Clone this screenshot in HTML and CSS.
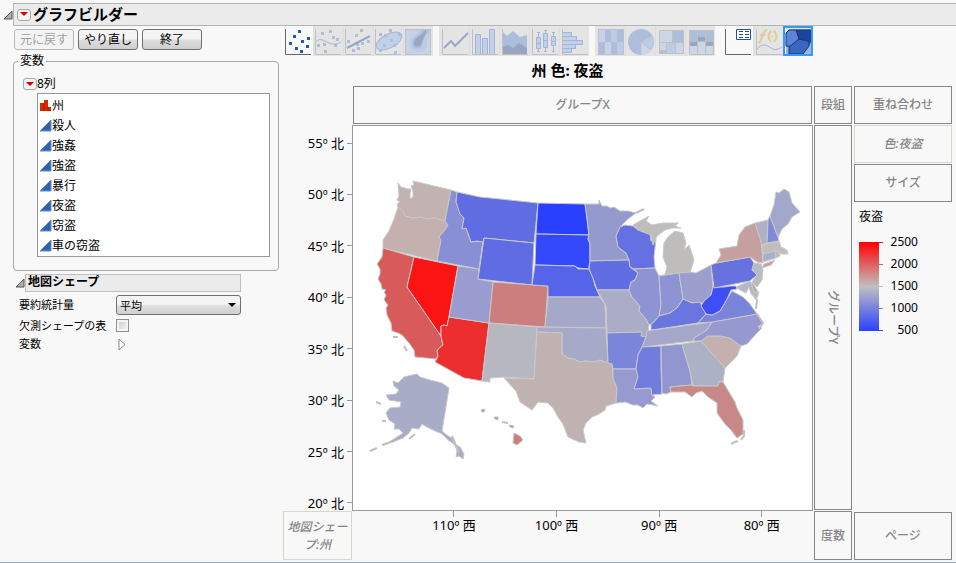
FILE: index.html
```
<!DOCTYPE html>
<html lang="ja">
<head>
    <meta charset="UTF-8">
    <meta name="viewport" content="width=device-width, initial-scale=1.0">
    <title>グラフビルダー</title>
    <link rel="stylesheet" href="styles.css">
</head>
<body>
    <header class="titlebar">
        <svg class="disclosure" width="10" height="10"><path d="M1 9H9V1Z"/></svg>
        <div class="titlebar-band">
            <button class="menu-button" aria-label="メニュー"><svg width="8" height="5"><path d="M0 0H8L4 4Z"/></svg></button>
            <h1>グラフビルダー</h1>
        </div>
    </header>

    <main class="workspace">
        <aside class="sidebar">
            <div class="actions">
                <button disabled>元に戻す</button>
                <button>やり直し</button>
                <button>終了</button>
            </div>

            <fieldset class="variables">
                <legend>変数</legend>
                <div class="variables-head">
                    <button class="menu-button" aria-label="列メニュー"><svg width="8" height="5"><path d="M0 0H8L4 4Z"/></svg></button>
                    <span>8列</span>
                </div>
                <ul class="variable-list">
                    <li><svg class="nominal" width="12" height="12"><path d="M0 11V3H4V0H8V7H11V11Z"/><path class="line" d="M4 3V11M8 7V11"/></svg>州</li>
                    <li><svg class="continuous" width="12" height="12"><path d="M0 11L11 0V11Z"/></svg>殺人</li>
                    <li><svg class="continuous" width="12" height="12"><path d="M0 11L11 0V11Z"/></svg>強姦</li>
                    <li><svg class="continuous" width="12" height="12"><path d="M0 11L11 0V11Z"/></svg>強盗</li>
                    <li><svg class="continuous" width="12" height="12"><path d="M0 11L11 0V11Z"/></svg>暴行</li>
                    <li><svg class="continuous" width="12" height="12"><path d="M0 11L11 0V11Z"/></svg>夜盗</li>
                    <li><svg class="continuous" width="12" height="12"><path d="M0 11L11 0V11Z"/></svg>窃盗</li>
                    <li><svg class="continuous" width="12" height="12"><path d="M0 11L11 0V11Z"/></svg>車の窃盗</li>
                </ul>
            </fieldset>

            <section class="shape-options">
                <div class="shape-head">
                    <svg class="disclosure" width="10" height="10"><path d="M1 9H9V1Z"/></svg>
                    <h2>地図シェープ</h2>
                </div>
                <div class="shape-form">
                    <label for="summary">要約統計量</label>
                    <div class="select">
                        <select id="summary"><option>平均</option></select>
                    </div>
                    <label for="missing">欠測シェープの表</label>
                    <input type="checkbox" id="missing">
                    <span>変数</span>
                    <button class="expand" aria-label="変数を開く"><svg width="8" height="13"><path d="M1 1L7 6.500L1 12Z"/></svg></button>
                </div>
            </section>
        </aside>

        <section class="builder">
            <nav class="toolbar">
                <div class="tool-group">
                    <button class="tool on" aria-label="点"><svg viewBox="0 0 30 30">
                        <path class="axis" d="M2.5 3V28.5H28"/>
                        <path class="dots" d="M15 4h3v3h-3zM10 9h3v3h-3zM6 16h3v3h-3zM18 14h3v3h-3zM24 11h3v3h-3zM23 19h3v3h-3zM12 21h3v3h-3zM17 24h3v3h-3z"/>
                    </svg></button>
                    <button class="tool" aria-label="平滑線"><svg viewBox="0 0 30 30">
                        <path class="axis" d="M2.5 3V28.5H28"/>
                        <path class="dots" d="M16 4h3v3h-3zM8 6h3v3h-3zM19 10h3v3h-3zM23 12h3v3h-3zM4 18h3v3h-3zM10 17h3v3h-3zM21 18h3v3h-3zM11 24h3v3h-3z"/>
                        <path class="line" d="M3 16C7 11 11 15 16 17S25 18 28 16"/>
                    </svg></button>
                    <button class="tool" aria-label="あてはめ線"><svg viewBox="0 0 30 30">
                        <path class="axis" d="M2.5 3V28.5H28"/>
                        <path class="dots" d="M17 3h3v3h-3zM12 8h3v3h-3zM4 14h3v3h-3zM13 17h3v3h-3zM18 16h3v3h-3zM24 14h3v3h-3zM9 23h3v3h-3zM14 21h3v3h-3z"/>
                        <path class="line thick" d="M4 22L27 10"/>
                    </svg></button>
                    <button class="tool" aria-label="楕円"><svg viewBox="0 0 30 30">
                        <path class="axis" d="M2.5 3V28.5H28"/>
                        <ellipse class="area" cx="16" cy="15" rx="14" ry="7" transform="rotate(-28 16 15)"/>
                        <path class="dots" d="M16 3h3v3h-3zM6 7h3v3h-3zM11 8h3v3h-3zM25 7h3v3h-3zM17 13h3v3h-3zM10 18h3v3h-3zM20 18h3v3h-3zM6 23h3v3h-3zM21 25h3v3h-3z"/>
                    </svg></button>
                    <button class="tool" aria-label="等高線"><svg viewBox="0 0 30 30">
                        <rect class="contour" x="2.5" y="3.5" width="25" height="25"/>
                        <path class="soft" d="M15 4C16 9 7 9 6 15S10 27 17 26S23 21 24 16S27 10 27 4Z"/>
                        <path class="deep" d="M19 4C18 9 10 10 9 16S13 23 17 22S19 16 21 12S25 8 26 4Z"/>
                        <path class="dark" d="M22 4C20 10 11 11 11 17S18 21 19 16S23 10 23 4Z"/>
                    </svg></button>
                </div>
                <div class="tool-group">
                    <button class="tool" aria-label="折れ線"><svg viewBox="0 0 30 30">
                        <path class="axis" d="M3.5 3V28.5H29"/>
                        <path class="line thick" d="M5 22L12 15L16 20L29 7"/>
                    </svg></button>
                    <button class="tool" aria-label="棒"><svg viewBox="0 0 30 30">
                        <path class="axis" d="M3.5 3V28.5H29"/>
                        <path class="area" d="M6.500 28V8.500H11.500V28M13.500 28V12.500H18.500V28M20.500 28V3.500H25.500V28"/>
                    </svg></button>
                    <button class="tool" aria-label="面"><svg viewBox="0 0 30 30">
                        <path class="deep" d="M4 6L8 10L14 5L21 11L28 9V28H4Z"/>
                        <path class="dark" d="M4 21L9 19L14 22L20 17L28 22V28H4Z"/>
                        <path class="axis" d="M3.5 3V28.5H29"/>
                    </svg></button>
                    <button class="tool" aria-label="箱ひげ図"><svg viewBox="0 0 30 30">
                        <path class="axis" d="M3.5 3V28.5H29"/>
                        <path class="line" d="M9.500 6V26M16.500 4V26M24.500 6V26M8 6.500H11M8 25.500H11M15 4.500H18M15 25.500H18M23 6.500H26M23 25.500H26"/>
                        <path class="area" d="M7.500 11.500h4v11h-4zM14.500 7.500h4v14h-4zM22.500 10.500h4v9h-4zM7.500 17.500h4M14.500 14.500h4M22.500 15.500h4"/>
                    </svg></button>
                    <button class="tool" aria-label="ヒストグラム"><svg viewBox="0 0 30 30">
                        <path class="area" d="M3.500 6.500h9v4h-9zM3.500 10.500h14v4h-14zM3.500 14.500h20v4h-20zM3.500 18.500h13v4h-13zM3.500 22.500h9v4h-9z"/>
                        <path class="axis" d="M3.5 3V28.5H29"/>
                    </svg></button>
                </div>
                <div class="tool-group">
                    <button class="tool" aria-label="ヒートマップ"><svg viewBox="0 0 30 30">
                        <rect class="contour" x="3.5" y="3.5" width="25" height="25"/>
                        <path class="deep" d="M10 4h6v12h-6zM22 4h6v12h-6zM4 16h6v12h-6zM16 16h6v12h-6z"/>
                        <path class="soft" d="M16 4h6v12h-6zM22 16h6v12h-6z"/>
                    </svg></button>
                    <button class="tool" aria-label="円"><svg viewBox="0 0 30 30">
                        <circle class="deep" cx="16" cy="16" r="13"/>
                        <path class="soft" d="M16 16L28 10A13 13 0 0 1 26 24Z"/>
                        <path class="pale" d="M16 16L26 24A13 13 0 0 1 16 29Z"/>
                        <path class="line thin" d="M6 8L16 16L28 10M16 16L26 24M16 16V29"/>
                    </svg></button>
                    <button class="tool" aria-label="ツリーマップ"><svg viewBox="0 0 30 30">
                        <rect class="pale" x="4" y="5" width="24" height="23"/>
                        <path class="deep" d="M18 5h10v11H18zM4 25h7v3H4z"/>
                        <path class="soft" d="M12 16h9v12h-9z"/>
                        <path class="axis" d="M4.500 4.500H28.500V27.500H4.500ZM4.500 16.500H28.500M17.500 4.500V16.500M11.500 16.500V27.500M20.500 16.500V27.500M4.500 24.500H11.500"/>
                    </svg></button>
                    <button class="tool" aria-label="モザイク"><svg viewBox="0 0 30 30">
                        <path class="deep" d="M4 5h24v11H4z"/>
                        <path class="pale" d="M4 16h24v12H4z"/>
                        <path class="dark" d="M4 16h8v4H4zM12 11h8v4h-8zM20 16h8v4h-8z"/>
                        <path class="axis" d="M4.500 4.500H28.500V28.500H4.500ZM12.500 4.500V28.500M20.500 4.500V28.500"/>
                    </svg></button>
                </div>
                <div class="tool-group last">
                    <button class="tool on" aria-label="凡例"><svg viewBox="0 0 30 30">
                        <path class="axis" d="M2.5 3V28.5H28"/>
                        <path class="caption" d="M13.500 3.500H27.500V13.500H13.500Z"/>
                        <path class="caption-line" d="M16 5.500h4M16 8.500h4M16 11.500h4M22 5.500h4M22 8.500h4M22 11.500h4"/>
                    </svg></button>
                    <button class="tool" aria-label="計算式"><svg viewBox="0 0 30 30">
                        <path class="axis" d="M3.5 3V28.5H29"/>
                        <path class="formula" d="M5 16C9 19 9 3 14 4M7 9H12M18 5Q13 10 18 16M21 5Q26 10 21 16"/>
                        <circle class="formula-dot" cx="19.500" cy="10.500" r="1"/>
                        <path class="line" d="M4 23C9 17 14 19 18 22S26 23 29 21"/>
                    </svg></button>
                    <button class="tool selected" aria-label="地図シェープ"><svg viewBox="0 0 30 30">
                        <rect fill="#9fb5dc" x="2" y="3" width="26" height="25"/>
                        <path fill="#f0f3f8" d="M2 3H6L3 7V28H2Z"/>
                        <path fill="#1c449c" d="M13 4H28V16L16 13Z"/>
                        <path fill="#5c85d6" d="M6 4H13L16 13L7 21L3 20V7Z"/>
                        <path fill="#3a66be" d="M16 13L28 16L26 20L20 28H6V21Z"/>
                        <path fill="none" stroke="#173370" d="M13 4L16 13L28 16M16 13L6 21M28 4H6L3 7V20H6V28H20L26 20V16"/>
                    </svg></button>
                </div>
            </nav>

            <div class="chart">
                <div class="chart-main">
                    <h2 class="chart-title">州 色: 夜盗</h2>
                    <div class="zone group-x">グループX</div>
                    <div class="zone wrap">段組</div>
                    <div class="axis-y">
                        <span>55º 北</span>
                        <span>50º 北</span>
                        <span>45º 北</span>
                        <span>40º 北</span>
                        <span>35º 北</span>
                        <span>30º 北</span>
                        <span>25º 北</span>
                        <span>20º 北</span>
                    </div>
                    <div class="plot">
                        <svg class="map" viewBox="353 126 459 384" role="img" aria-label="州別の夜盗の地図">
                            <!-- Pacific and mountain states -->
                            <path fill="#c2b2b1" d="M398 183L401 187L408 189L411 189L410 194L410 199L413 197L413 191L411 186L414 185L413 181L451 190L445 221L435 218L428 219L420 217L412 218L405 216L403 211L398 207L397 204L400 202L397 200L399 196Z"/>
                            <path fill="#c3b0af" d="M398 207L403 211L405 216L412 218L420 217L428 219L435 218L445 221L448 225L445 230L439 237L441 240L437 261L383 248L383 240L389 231L394 219Z"/>
                            <path fill="#d85a5a" d="M383 248L414 257L407 287L441 336L443 345L439 348L437 351L438 356L436 359L415 357L414 350L409 343L402 335L398 333L392 331L391 323L387 315L386 308L388 305L384 300L386 295L384 292L386 290L382 289L381 284L378 279L380 274L380 269L377 264L382 257Z"/>
                            <path fill="#fb1414" d="M414 257L458 266L449 317L447 326L444 325L441 326L441 336L407 287Z"/>
                            <path fill="#ec2e2e" d="M449 317L489 323L482 381L464 378L435 362L438 356L437 351L439 348L443 345L441 336L441 326L444 325L447 326Z"/>
                            <path fill="#9a9ccf" d="M458 266L479 269L478 279L493 282L489 323L449 317Z"/>
                            <path fill="#888fd4" d="M451 190L457 192L456 202L460 211L464 218L462 228L466 228L471 242L483 241L479 269L437 261L441 240L439 237L445 230L448 225L445 221Z"/>
                            <path fill="#606ce2" d="M457 192L480 197L500 199L538 203L534 243L484 238L483 242L477 241L471 242L469 236L466 228L462 229L464 218L460 214L456 202Z"/>
                            <path fill="#606ce4" d="M484 238L534 243L532 285L478 279Z"/>
                            <path fill="#cb7e7d" d="M493 282L548 286L545 327L489 323Z"/>
                            <path fill="#b6b7c1" d="M489 323L537 327L534 379L503 377L490 378V382L482 381Z"/>

                            <!-- Plains -->
                            <path fill="#2a40ff" d="M538 203L585 204L587 216L588 227L589 235L536 234Z"/>
                            <path fill="#3449fb" d="M536 234L589 235L588 239L590 244V261L589 266L589 269L578 268L575 266L535 265Z"/>
                            <path fill="#5664ea" d="M535 265L575 266L578 269L589 269L593 278L595 286L600 297L548 297V286L532 285Z"/>
                            <path fill="#a5a8c9" d="M548 297H600L605 305L606 328L545 327Z"/>
                            <path fill="#a6aac8" d="M537 327L606 328L608 363L600 360L594 362L586 361L580 362L574 359L568 358L562 354V333L537 332Z"/>
                            <path fill="#c1b2b2" d="M537 332L562 333V354L568 358L574 359L580 362L586 361L594 362L600 360L608 363L612 364L613 378L617 388L616 403L606 406L605 410L599 414L592 417L586 423L583 430L586 443L579 442L568 437L563 424L558 417L553 408L548 403L538 402L532 410L520 402L516 391L504 378L534 379Z"/>
                            <path fill="#959ace" d="M585 204H599V200L602 206L607 206L610 208L614 207L620 211L628 211L636 213L628 219L620 227L616 236L618 247L626 253L629 260L590 261V244L588 239L589 235Z"/>
                            <path fill="#606de3" d="M590 261L629 260L630 267L638 273L635 280L631 282L629 290L597 290L593 278L589 269Z"/>
                            <path fill="#abadc6" d="M597 290L629 290L632 297L640 306L639 311L646 319L649 325L648 332L646 337L641 336L642 332L607 333L606 306Z"/>
                            <path fill="#7b85da" d="M607 333L642 332L641 336L646 337L642 347L638 355L636 369L613 369L612 364L608 363Z"/>
                            <path fill="#969ad0" d="M613 369H636L638 377L634 389L651 388L652 395L655 397L651 401L658 406L653 405L647 404L643 408L638 405L633 405L625 402L616 403L617 388L613 378Z"/>

                            <!-- Great Lakes -->
                            <path fill="#6570e2" d="M620 227L625 225L633 226L638 230L650 233L651 241L656 239L654 257L655 268L634 269L630 267L629 260L626 253L618 247L616 236Z"/>
                            <path fill="#bfbdbc" d="M633 225L640 221L649 216L646 221L652 225L663 223L674 223L677 227L681 228L672 228L665 230L657 236L653 245L651 235L638 230ZM659 276L665 275L667 267L663 257L664 243L668 237L675 231L683 233L686 243L684 250L689 245L694 260L690 272L679 273Z"/>
                            <path class="islands" d="M636 213L644 209M673 225L678 223"/>
                            <path fill="#8d93d3" d="M634 269L655 268L659 276L661 305L659 316L654 322L651 324L649 325L646 319L639 311L640 306L632 297L629 290L631 282L635 280L638 273Z"/>
                            <path fill="#8d93d3" d="M659 276L679 273L683 299L677 308L670 313L659 316L661 305Z"/>
                            <path fill="#9c9fcd" d="M679 273L690 272L696 273L711 265L713 287L711 295L704 303L692 303L683 299Z"/>
                            <path fill="#6a75df" d="M651 330V324L654 322L659 316L670 313L677 308L683 299L692 303L700 302L706 314L698 323L652 330Z"/>
                            <path fill="#a5a7ca" d="M647 331L712 322L707 330L694 338L693 341L642 347L646 337Z"/>

                            <!-- South -->
                            <path fill="#717cde" d="M642 347L661 346V370L662 394L652 395L651 388L634 389L638 377L636 369L638 355Z"/>
                            <path fill="#9296d0" d="M661 346L682 344L690 371L692 385L670 387L671 392L666 394L662 393Z"/>
                            <path fill="#adb1c5" d="M682 344L701 341L710 351L725 368L723 382L719 382L718 386L693 386L690 371Z"/>
                            <path fill="#c3b0af" d="M701 341L708 336L720 336L730 338L741 346L737 356L725 368L710 351Z"/>
                            <path fill="#9599d0" d="M712 322L757 314L763 323L758 327L762 328L757 333L747 344L741 346L730 338L720 336L708 336L701 341L693 341L694 338L707 330Z"/>
                            <path fill="#7a85d9" d="M698 323L706 314L712 315L720 311L727 299L732 291L743 297L750 304L757 314L712 322Z"/>
                            <path fill="#3c4ff8" d="M713 287L724 287L730 286L736 286L737 289L731 290L727 299L720 311L712 315L706 314L701 306L704 301L711 295Z"/>
                            <path fill="#c98888" d="M670 387L692 385L693 386L718 386L719 382L723 382L729 392L735 402L737 408L743 420V434L737 438L731 430L725 424L717 413V403L708 397L702 391L696 393L692 397L685 392L671 392Z"/>
                            <path class="islands" d="M744 430V436L741 440M731 444L735 442L738 441M753 295L757 300L756 309M757 314L763 323L759 329"/>

                            <!-- Northeast -->
                            <path fill="#6872df" d="M711 265L716 263L750 257L754 263L752 270L757 275L750 281L714 288Z"/>
                            <path fill="#c5a09f" d="M716 263L721 255L719 249L737 246L739 235L745 227L755 223L761 240L763 263L757 262L750 257ZM762 268L764 264L775 260L771 265Z"/>
                            <path fill="#adb0c6" d="M755 223L768 220L767 243L762 245Z"/>
                            <path fill="#8289d8" d="M768 220L770 216L778 237L779 241L767 243Z"/>
                            <path fill="#a3a7ca" d="M770 216L774 205L776 192L779 193L784 189L789 192L792 203L800 212L792 217L788 224L782 229L778 237Z"/>
                            <path fill="#c1bfbe" d="M762 245L779 241L781 247L787 250L788 254L782 254L776 251L763 254Z"/>
                            <path fill="#a9aecb" d="M763 254L775 251L776 258L763 262Z"/>
                            <path fill="#bbbbc0" d="M775 251L779 252L780 256L776 258Z"/>
                            <path fill="#b8bac4" d="M754 263L761 264L763 270L762 280L757 287L752 282L757 275L752 270Z"/>
                            <path fill="#b4b7c5" d="M736 287L750 281L754 292L759 292L757 298L751 294L749 287L746 293L740 290Z"/>
                            <path fill="#c9a09f" d="M751 282L754 285L758 292H754Z"/>

                            <!-- Alaska and Hawaii -->
                            <path fill="#a9acc6" d="M393 381L398 383L404 377L412 375L417 374L420 377L430 380L442 383L449 388L442 431L448 436L454 439L456 445L460 447L464 454L463 459L459 456L456 457L457 450L454 444L448 440L442 434L433 430L425 426L422 424L419 429L412 428L409 433L403 438L393 442L384 445L394 439L403 433L399 429L394 429L395 424L389 420L386 413L390 408L400 407L401 402L389 400L386 395L396 394L399 390L394 386Z"/>
                            <path class="islands" d="M376 402L381 404M370 451L377 448M382 445L388 443M382 421H386M409 439L415 434M452 436L459 453M393 337H398M404 346L407 351M502 422L508 423"/>
                            <path fill="#cb7e7d" d="M481 410L485 409L484 412L482 412ZM494 417L498 417L498 420L495 419ZM509 425L514 426L513 428L510 427ZM514 433L520 436L523 440L517 445L513 443Z"/>
                        </svg>
                    </div>
                    <div class="zone group-y"><span>グループY</span></div>
                    <div class="zone filled map-shape">地図シェープ:州</div>
                    <div class="axis-x">
                        <span>110º 西</span>
                        <span>100º 西</span>
                        <span>90º 西</span>
                        <span>80º 西</span>
                    </div>
                    <div class="zone freq">度数</div>
                </div>

                <div class="chart-side">
                    <div class="zone">重ね合わせ</div>
                    <div class="zone filled">色:夜盗</div>
                    <div class="zone">サイズ</div>
                    <div class="color-legend">
                        <h3>夜盗</h3>
                        <div class="scale">
                            <div class="ramp"></div>
                            <ol>
                                <li class="t2500">2500</li>
                                <li class="t2000">2000</li>
                                <li class="t1500">1500</li>
                                <li class="t1000">1000</li>
                                <li class="t500">500</li>
                            </ol>
                        </div>
                    </div>
                    <div class="zone page">ページ</div>
                </div>
            </div>
        </section>
    </main>
</body>
</html>
```
FILE: styles.css
```
/* Global settings */
:root {
    --color-bg: #f8f8f8;
    --color-band: #ebebeb;
    --color-border: #b4b4b4;
    --color-zone: #868686;
    --font-default: "Noto Sans", "Noto Sans CJK JP", sans-serif;
}

* {
    box-sizing: border-box;
}

body {
    display: flex;
    flex-direction: column;
    min-height: 100vh;
    margin: 0;
    padding-top: 3px;
    border-bottom: 1px solid #98a4c8;
    background: var(--color-bg);
    color: #000;
    font-family: var(--font-default);
    font-size: 12px;
    line-height: 16px;
}

h1, h2, h3 {
    margin: 0;
}

button, select {
    font-family: inherit;
    font-size: 12px;
}

svg {
    display: block;
}

/* Title bar */
.titlebar {
    display: flex;
    align-items: center;
    padding-left: 3px;
}

.disclosure {
    flex: none;
    fill: #b0b0b0;
    stroke: #555;
}

.titlebar-band {
    display: flex;
    flex: 1;
    align-items: center;
    gap: 2px;
    height: 23px;
    padding-left: 3px;
    border: 1px solid var(--color-border);
    border-right: 0;
    background: var(--color-band);
}

.titlebar-band h1 {
    padding-bottom: 2px;
    font-size: 15px;
    line-height: 18px;
}

.menu-button {
    display: flex;
    align-items: center;
    justify-content: center;
    width: 14px;
    height: 12px;
    padding: 0;
    border: 1px solid #a8a8a8;
    border-radius: 3px;
    background: #f4f4f4;
}

.menu-button svg {
    fill: #d40000;
}

/* Left side */
.workspace {
    display: flex;
    flex: 1;
}

.sidebar {
    flex: none;
    width: 279px;
    padding: 3px 0 0 13px;
}

.actions {
    display: flex;
    gap: 4px;
    padding-left: 1px;
}

.actions button {
    width: 60px;
    height: 21px;
    padding: 0;
    border: 1px solid #707070;
    border-radius: 3px;
    background: linear-gradient(#f4f4f4 45%, #dcdcdc 55%, #cfcfcf);
    color: #000;
    line-height: 16px;
}

.actions button:disabled {
    border-color: #b8b8b8;
    background: #f4f4f4;
    color: #a0a0a0;
}

.variables {
    min-width: 0;
    margin: 3px 0 0;
    padding: 7px 8px 13px;
    border: 1px solid #a8a8a8;
    border-radius: 4px;
}

.variables legend {
    margin-left: -4px;
    padding: 0 2px;
}

.variables-head {
    display: flex;
    align-items: center;
    padding-left: 1px;
}

.variable-list {
    height: 164px;
    margin: 1px 0 0 15px;
    padding: 2px 0 0 2px;
    border: 1px solid #989898;
    background: #fff;
    list-style: none;
}

.variable-list li {
    display: flex;
    align-items: center;
    height: 20px;
}

.nominal {
    fill: #d92800;
}

.nominal .line {
    stroke: #a01800;
}

.continuous {
    fill: #2c62b4;
    stroke: #6c8cc0;
}

/* Map shape options */
.shape-head {
    display: flex;
    align-items: center;
    margin-top: 3px;
    padding-left: 2px;
}

.shape-head h2 {
    width: 216px;
    height: 18px;
    padding-left: 2px;
    border: 1px solid #c0c0c0;
    background: var(--color-band);
    font-size: 12px;
    line-height: 14px;
}

.shape-form {
    display: grid;
    grid-template-columns: 97px 125px;
    align-items: center;
    padding: 3px 0 0 6px;
    font-size: 11px;
}

.select {
    position: relative;
}

.select::after {
    content: "";
    position: absolute;
    top: 8px;
    right: 5px;
    border: 4px solid transparent;
    border-top-color: #000;
    border-bottom: 0;
    pointer-events: none;
}

.select select {
    display: block;
    width: 100%;
    height: 20px;
    padding: 0 3px;
    border: 1px solid #707070;
    border-radius: 3px;
    appearance: none;
    background: linear-gradient(#f4f4f4 45%, #dedede 55%, #d0d0d0);
    font-size: 11px;
    color: #000;
}

.shape-form input {
    width: 13px;
    height: 13px;
    margin: 4px 0;
    border: 1px solid #909090;
    appearance: none;
    background: linear-gradient(135deg, #c4c8d0, #fafafa);
    box-shadow: inset 0 0 0 2px #f4f4f4;
}

.expand {
    justify-self: start;
    padding: 0 2px;
    border: 0;
    background: none;
}

.expand svg {
    fill: #fff;
    stroke: #888;
}

/* Toolbar */
.builder {
    display: flex;
    flex: 1;
    flex-direction: column;
    min-width: 0;
    padding: 0 4px 2px;
}

.toolbar {
    display: flex;
    gap: 6px;
}

.tool-group {
    display: flex;
}

.tool-group.last {
    margin-left: 2px;
}

.tool {
    width: 30px;
    height: 30px;
    padding: 0;
    border: 0;
    background: #e4e4e4;
}

.tool + .tool {
    box-shadow: inset 1px 0 0 #ddd;
}

.tool svg {
    width: 30px;
    height: 30px;
    fill: none;
}

.tool .axis {
    stroke: #c0c0c0;
}

.tool .dots {
    fill: #aebed8;
}

.tool .line {
    stroke: #a4b4d4;
}

.tool .line.thick {
    stroke: #98a6c8;
    stroke-width: 2;
}

.tool .line.thin {
    stroke: #b8c4d8;
}

.tool .area {
    fill: #c2d0e8;
    stroke: #a2b4d8;
}

.tool .contour {
    fill: #c8d2e4;
    stroke: #bcc2cc;
}

.tool .pale {
    fill: #ccd6e6;
}

.tool .soft {
    fill: #bccce4;
}

.tool .deep {
    fill: #adbedc;
}

.tool .dark {
    fill: #98a6c4;
}

.tool .formula {
    stroke: #dfcd96;
    stroke-width: 2;
}

.tool .formula-dot {
    fill: #dfcd96;
}

.tool.on {
    background: none;
}

.tool.on .axis {
    stroke: #666;
}

.tool.on .dots {
    fill: #2458b8;
}

.tool .caption {
    fill: #fff;
    stroke: #2450a0;
}

.tool .caption-line {
    stroke: #1c48a0;
}

.tool.selected {
    outline: 2px solid #3498fc;
    outline-offset: -2px;
}

/* Chart */
.chart {
    display: flex;
    flex: 1;
    gap: 2px;
}

.chart-main {
    display: grid;
    flex: 1;
    grid-template-columns: 69px 1fr 39px;
    grid-template-rows: 30px 39px minmax(385px, 1fr) 49px;
    min-width: 0;
}

.chart-title {
    grid-column: 1 / -1;
    font-size: 15px;
    line-height: 28px;
    text-align: center;
}

.zone {
    display: flex;
    align-items: center;
    justify-content: center;
    border: 1px solid var(--color-zone);
    color: var(--color-zone);
    font-weight: 500;
    text-align: center;
}

.zone.filled {
    border-color: #d8d8c8;
    font-style: italic;
}

.group-x {
    grid-column: 2;
    margin: 0 1px 1px;
}

.wrap, .group-y, .freq {
    margin-left: 1px;
}

.wrap {
    margin-bottom: 1px;
}

.axis-y {
    display: flex;
    flex-direction: column;
    justify-content: space-between;
    padding-top: 10px;
    font-size: 13px;
}

.axis-y span {
    display: flex;
    align-items: center;
    justify-content: flex-end;
    gap: 3px;
}

.axis-y span::after {
    content: "";
    width: 5px;
    height: 1px;
    background: #999;
}

.plot {
    border: 1px solid #999;
    background: #fff;
}

.map {
    width: 100%;
    height: 100%;
    stroke: #c8c8c8;
    stroke-linejoin: round;
}

.map .islands {
    fill: none;
    stroke: #c0c0c4;
    stroke-width: 2;
}

.group-y {
    margin-bottom: 1px;
}

.group-y span {
    writing-mode: vertical-rl;
    text-orientation: sideways;
}

.map-shape {
    padding: 0 2px;
    line-height: 18px;
}

.axis-x {
    display: grid;
    grid-template-columns: repeat(4, 1fr);
    align-items: start;
    padding-left: 11%;
    font-size: 13px;
}

.axis-x span {
    display: flex;
    flex-direction: column;
    align-items: center;
}

.axis-x span::before {
    content: "";
    width: 1px;
    height: 6px;
    background: #999;
}

/* Right side */
.chart-side {
    display: flex;
    flex-direction: column;
    flex: none;
    gap: 1px;
    width: 98px;
    padding-top: 30px;
}

.chart-side .zone {
    height: 38px;
}

.color-legend {
    padding: 6px 5px;
}

.color-legend h3 {
    font-size: 12px;
    font-weight: 400;
}

.scale {
    display: flex;
    margin-top: 6px;
}

.ramp {
    width: 20px;
    height: 89px;
    margin-top: 11px;
    background: linear-gradient(#f00, #c0c0c0 50%, #2a40ff);
}

.scale ol {
    width: 39px;
    margin: 0;
    padding: 0;
    list-style: none;
}

.scale li {
    display: flex;
    align-items: center;
    justify-content: space-between;
    height: 22px;
    line-height: 22px;
}

.scale li::before {
    content: "";
    width: 4px;
    height: 1px;
    background: currentColor;
}

.t2500::before { color: #f00; }
.t2000::before { color: #e06060; }
.t1500::before { color: #c0c0c0; }
.t1000::before { color: #7580e0; }
.t500::before { color: #2a40ff; }

.chart-side .page {
    height: 48px;
    margin-top: auto;
}
```
